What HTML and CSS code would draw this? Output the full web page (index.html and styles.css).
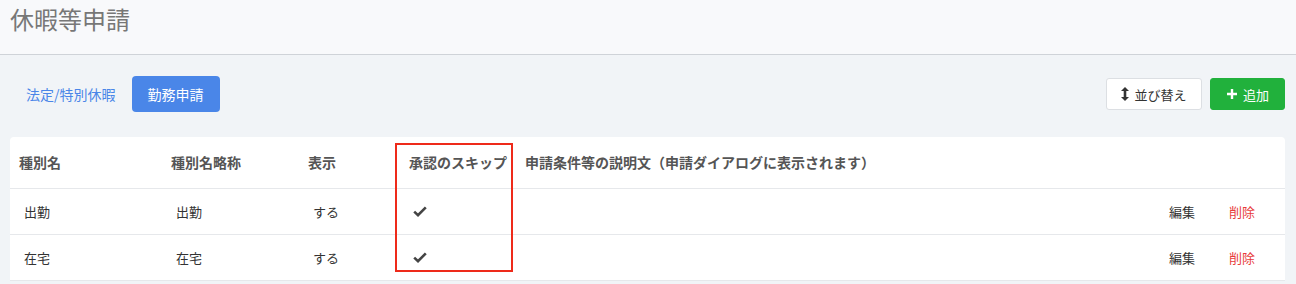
FILE: index.html
```html
<!DOCTYPE html>
<html lang="ja">
<head>
  <meta charset="utf-8">
  <title>休暇等申請</title>
  <link rel="stylesheet" href="styles.css">
</head>
<body>
  <header class="page-header">
    <h1 class="page-title">休暇等申請</h1>
  </header>

  <main class="content">
    <div class="toolbar">
      <nav class="tabs">
        <a class="tab" href="#">法定/特別休暇</a>
        <a class="tab active" href="#">勤務申請</a>
      </nav>
      <div class="actions">
        <button class="btn btn-light">
          <svg class="icon" width="8" height="14" viewBox="0 0 8 14"><path d="M4 0 L8 4 H5.3 V10 H8 L4 14 L0 10 H2.7 V4 H0 Z" fill="#333"/></svg>
          並び替え
        </button>
        <button class="btn btn-green">
          <svg class="icon" width="12" height="12" viewBox="0 0 12 12"><path d="M6 1 V11 M1 6 H11" stroke="#fff" stroke-width="2.4"/></svg>
          追加
        </button>
      </div>
    </div>

    <div class="card">
      <table class="type-table">
        <thead>
          <tr>
            <th class="col-name">種別名</th>
            <th class="col-short">種別名略称</th>
            <th class="col-show">表示</th>
            <th class="col-skip">承認のスキップ</th>
            <th class="col-desc">申請条件等の説明文（申請ダイアログに表示されます）</th>
            <th class="col-edit"></th>
            <th class="col-del"></th>
          </tr>
        </thead>
        <tbody>
          <tr>
            <td class="pad">出勤</td>
            <td class="pad">出勤</td>
            <td class="pad">する</td>
            <td class="check"><svg width="14" height="11" viewBox="0 0 14 11"><path d="M1.2 5.6 L5 9.2 L12.8 1.4" stroke="#444" stroke-width="2.6" fill="none"/></svg></td>
            <td></td>
            <td class="link">編集</td>
            <td class="link danger">削除</td>
          </tr>
          <tr>
            <td class="pad">在宅</td>
            <td class="pad">在宅</td>
            <td class="pad">する</td>
            <td class="check"><svg width="14" height="11" viewBox="0 0 14 11"><path d="M1.2 5.6 L5 9.2 L12.8 1.4" stroke="#444" stroke-width="2.6" fill="none"/></svg></td>
            <td></td>
            <td class="link">編集</td>
            <td class="link danger">削除</td>
          </tr>
        </tbody>
      </table>
      <div class="highlight"></div>
    </div>
  </main>
</body>
</html>
```

FILE: styles.css
```css
:root {
  --font: "Noto Sans CJK JP", "Noto Sans", sans-serif;
  --bg: #f1f4f7;
  --header-bg: #f8f9fb;
  --text: #333;
  --muted: #555;
  --blue: #4a86e8;
  --green: #21b13c;
  --red: #e83a3a;
}

* {
  box-sizing: border-box;
  margin: 0;
  padding: 0;
}

body {
  font-family: var(--font);
  color: var(--text);
  background: var(--bg);
  width: 1296px;
  height: 284px;
  overflow: hidden;
}

.page-header {
  height: 55px;
  background: var(--header-bg);
  border-bottom: 1px solid #cfd3d8;
  padding: 3px 10px 0;
}

.page-title {
  font-size: 24px;
  font-weight: 400;
  color: #777;
  line-height: 32px;
}

.content {
  padding: 21px 10px 0;
}

.toolbar {
  display: flex;
  justify-content: space-between;
  align-items: center;
  height: 36px;
  margin-bottom: 25px;
}

.tabs {
  display: flex;
  align-items: center;
}

.tab {
  display: block;
  font-size: 14px;
  color: var(--blue);
  text-decoration: none;
  padding: 0 16px;
  line-height: 36px;
  border-radius: 4px;
}

.tab.active {
  background: var(--blue);
  color: #fff;
}

.actions {
  display: flex;
  gap: 8px;
  padding-right: 1px;
}

.btn {
  display: inline-flex;
  align-items: center;
  justify-content: center;
  gap: 5px;
  height: 32px;
  font-family: var(--font);
  font-size: 13px;
  white-space: nowrap;
  border-radius: 3px;
  padding: 0;
  cursor: pointer;
}

.btn-light {
  background: #fff;
  border: 1px solid #dcdfe3;
  color: #333;
  width: 96px;
}

.btn-green {
  background: var(--green);
  border: 1px solid var(--green);
  color: #fff;
  width: 75px;
}

.card {
  position: relative;
  background: #fff;
  border-radius: 4px 4px 0 0;
  width: 1275px;
}

.type-table {
  width: 100%;
  border-collapse: collapse;
  font-size: 13px;
}

.type-table th {
  text-align: left;
  font-size: 14px;
  font-weight: 700;
  color: var(--muted);
  height: 51px;
  padding: 0 9px;
  border-bottom: 1px solid #e6e8eb;
}

.type-table td {
  height: 46px;
  padding: 0 9px;
  border-bottom: 1px solid #e6e8eb;
  color: #333;
}

.type-table td.pad {
  padding-left: 14px;
}

.col-name { width: 152px; }
.col-short { width: 137px; }
.col-show { width: 101px; }
.col-skip { width: 116px; }
.col-edit { width: 60px; }
.col-del { width: 65px; }

.check {
  padding-left: 13px !important;
}

.check svg {
  display: block;
}

.link.danger {
  color: var(--red);
}

.highlight {
  position: absolute;
  left: 385px;
  top: 6px;
  width: 118px;
  height: 129px;
  border: 2px solid #ee2a1a;
}
```
